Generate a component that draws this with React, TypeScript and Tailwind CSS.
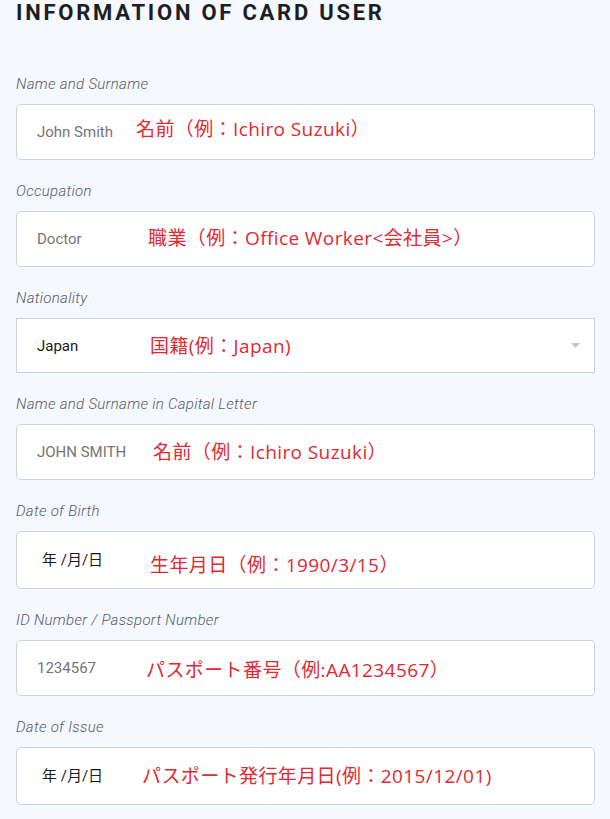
import React from 'react';

type Field = {
  label: string;
  value: string;
  kind: 'text' | 'select' | 'date';
  note: string;
  boxClass: string;
  valueClass: string;
  noteClass: string;
};

const fields: Field[] = [
  {
    label: 'Name and Surname',
    value: 'John Smith',
    kind: 'text',
    note: '名前（例：Ichiro Suzuki）',
    boxClass: 'h-[56px] rounded-[5px]',
    valueClass: 'w-[99px]',
    noteClass: 'mt-[-6px]',
  },
  {
    label: 'Occupation',
    value: 'Doctor',
    kind: 'text',
    note: '職業（例：Office Worker<会社員>）',
    boxClass: 'h-[56px] rounded-[5px]',
    valueClass: 'w-[111px]',
    noteClass: 'mt-[-3px]',
  },
  {
    label: 'Nationality',
    value: 'Japan',
    kind: 'select',
    note: '国籍(例：Japan)',
    boxClass: 'h-[55px] rounded-none',
    valueClass: 'w-[113px]',
    noteClass: 'mt-0',
  },
  {
    label: 'Name and Surname in Capital Letter',
    value: 'JOHN SMITH',
    kind: 'text',
    note: '名前（例：Ichiro Suzuki）',
    boxClass: 'h-[56px] rounded-[5px]',
    valueClass: 'w-[116px]',
    noteClass: 'mt-0',
  },
  {
    label: 'Date of Birth',
    value: '年 /月/日',
    kind: 'date',
    note: '生年月日（例：1990/3/15）',
    boxClass: 'h-[58px] rounded-[5px]',
    valueClass: 'w-[113px]',
    noteClass: 'mt-[9px]',
  },
  {
    label: 'ID Number / Passport Number',
    value: '1234567',
    kind: 'text',
    note: 'パスポート番号（例:AA1234567）',
    boxClass: 'h-[56px] rounded-[5px]',
    valueClass: 'w-[109px]',
    noteClass: 'mt-[4px]',
  },
  {
    label: 'Date of Issue',
    value: '年 /月/日',
    kind: 'date',
    note: 'パスポート発行年月日(例：2015/12/01)',
    boxClass: 'h-[58px] rounded-[5px]',
    valueClass: 'w-[105px]',
    noteClass: 'mt-0',
  },
];

function FieldRow({ field, first }: { field: Field; first: boolean }) {
  const valueColor =
    field.kind === 'text' ? 'text-[#757575]' : 'text-[#1b1b1b]';
  return (
    <div className={first ? 'mt-[48px]' : 'mt-[21px]'}>
      <label className="block h-[20px] text-[15px] leading-[20px] italic font-light tracking-[0.02em] text-[#555b61]">
        {field.label}
      </label>
      <div
        className={`mt-[10px] flex items-center border border-[#ccd2dc] bg-white pl-[20px] pr-[14px] ${field.boxClass}`}
      >
        <span
          className={`shrink-0 text-[15px] leading-[20px] ${valueColor} ${field.valueClass} ${
            field.kind === 'date' ? 'pl-[5px]' : ''
          }`}
          style={{ fontFamily: 'Roboto, "Noto Sans CJK JP", sans-serif' }}
        >
          {field.value}
        </span>
        <span
          className={`text-[19px] leading-[24px] tracking-[0.4px] text-[#df2a31] whitespace-nowrap ${field.noteClass}`}
          style={{ fontFamily: '"Open Sans", "Noto Sans CJK JP", sans-serif' }}
        >
          {field.note}
        </span>
        {field.kind === 'select' && (
          <svg className="ml-auto" width="9" height="5" viewBox="0 0 9 5">
            <path d="M0 0h9L4.5 5z" fill="#c4c6ca" />
          </svg>
        )}
      </div>
    </div>
  );
}

export default function App() {
  return (
    <div
      className="min-h-screen bg-[#f5f8fe] pl-4 pr-[15px] pb-8"
      style={{ fontFamily: 'Roboto, "Noto Sans CJK JP", sans-serif' }}
    >
      <h1 className="text-[22px] leading-[26px] font-bold tracking-[0.125em] text-[#1b1f23]">
        INFORMATION OF CARD USER
      </h1>
      {fields.map((f, i) => (
        <FieldRow key={i} field={f} first={i === 0} />
      ))}
    </div>
  );
}
